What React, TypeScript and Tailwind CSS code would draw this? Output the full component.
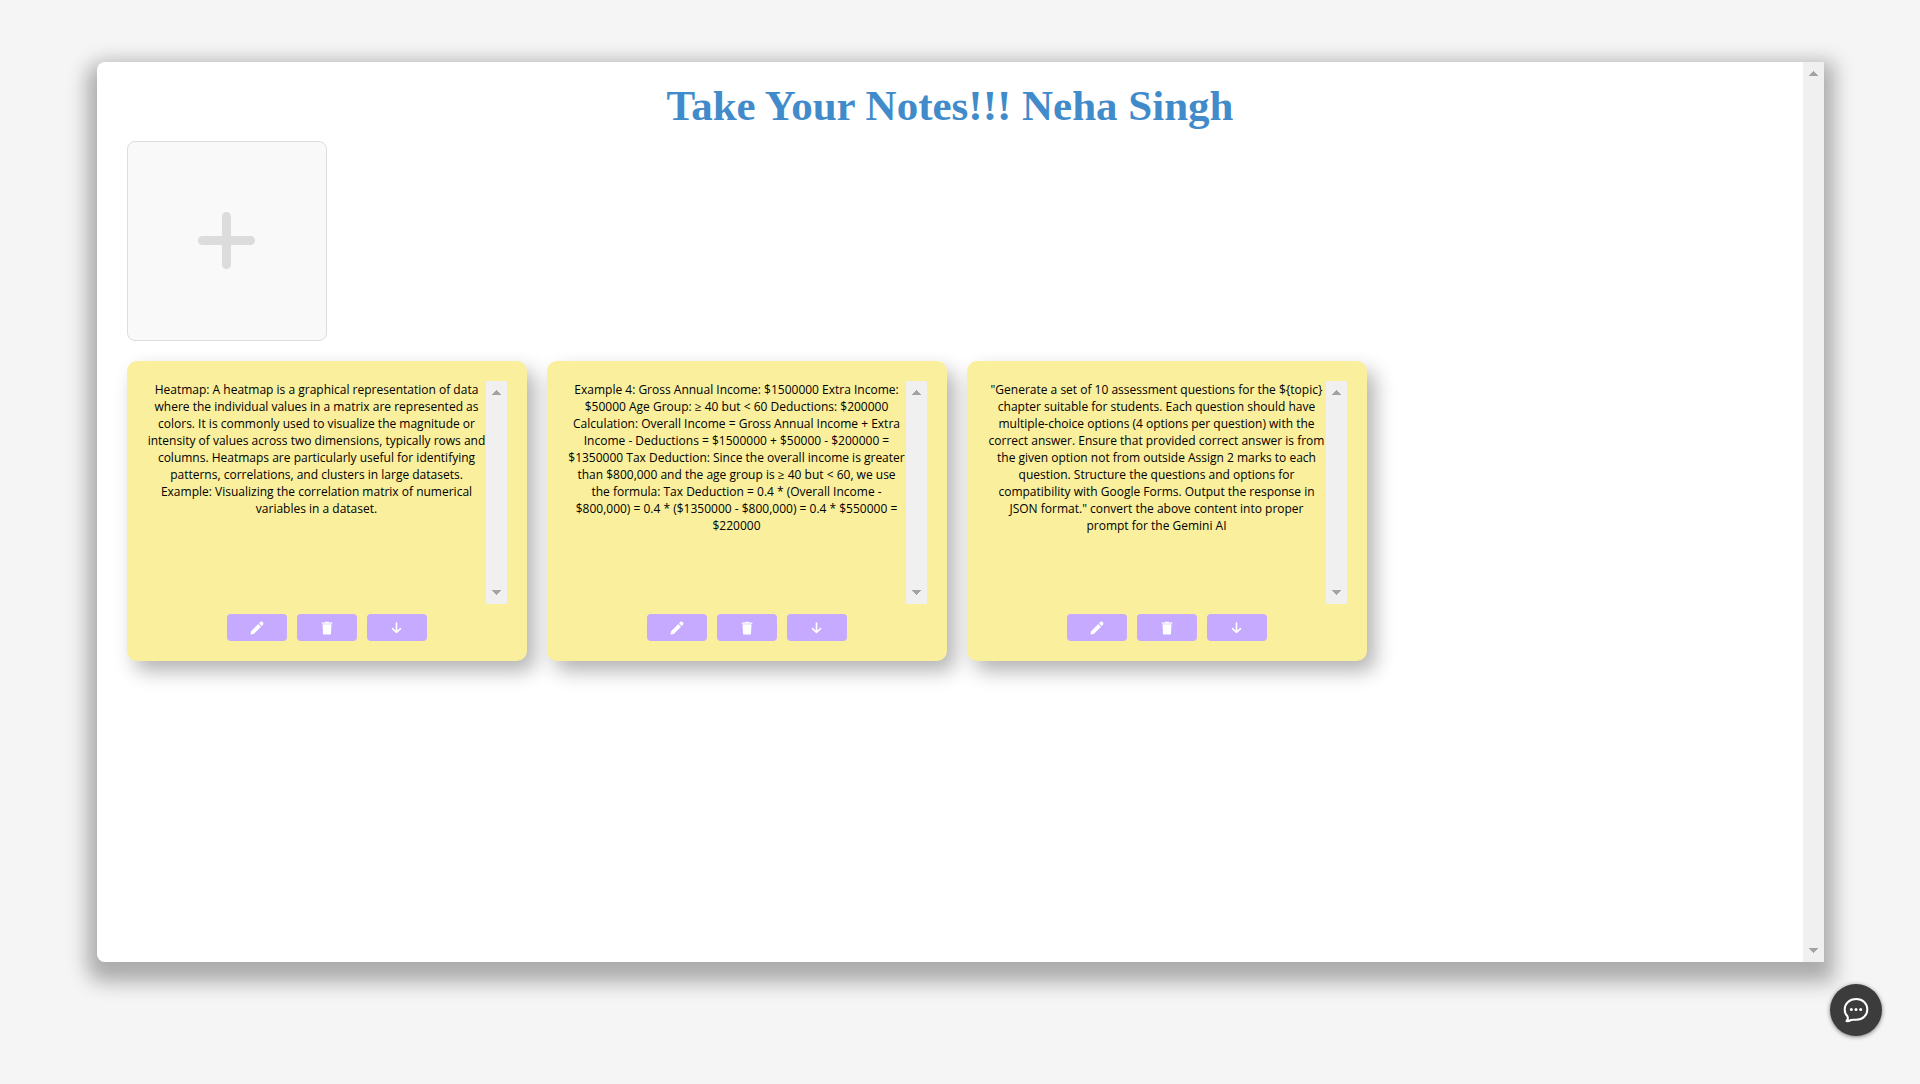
import React from "react";

const notes = [
  "Heatmap: A heatmap is a graphical representation of data where the individual values in a matrix are represented as colors. It is commonly used to visualize the magnitude or intensity of values across two dimensions, typically rows and columns. Heatmaps are particularly useful for identifying patterns, correlations, and clusters in large datasets. Example: Visualizing the correlation matrix of numerical variables in a dataset.",
  "Example 4: Gross Annual Income: $1500000 Extra Income: $50000 Age Group: ≥ 40 but < 60 Deductions: $200000 Calculation: Overall Income = Gross Annual Income + Extra Income - Deductions = $1500000 + $50000 - $200000 = $1350000 Tax Deduction: Since the overall income is greater than $800,000 and the age group is ≥ 40 but < 60, we use the formula: Tax Deduction = 0.4 * (Overall Income - $800,000) = 0.4 * ($1350000 - $800,000) = 0.4 * $550000 = $220000",
  '"Generate a set of 10 assessment questions for the ${topic} chapter suitable for students. Each question should have multiple-choice options (4 options per question) with the correct answer. Ensure that provided correct answer is from the given option not from outside Assign 2 marks to each question. Structure the questions and options for compatibility with Google Forms. Output the response in JSON format." convert the above content into proper prompt for the Gemini AI',
];

function ScrollTrack() {
  return (
    <div className="flex w-[21px] shrink-0 flex-col justify-between bg-[#f0f0f0] text-[#a3a3a3]">
      <button type="button" aria-label="Scroll up" className="flex h-[23px] items-center justify-center">
        <svg width="9" height="5" viewBox="0 0 9 5" fill="currentColor" shapeRendering="crispEdges">
          <path d="M4.5 0 9 5H0z" />
        </svg>
      </button>
      <button type="button" aria-label="Scroll down" className="flex h-[23px] items-center justify-center">
        <svg width="9" height="5" viewBox="0 0 9 5" fill="currentColor" shapeRendering="crispEdges">
          <path d="M4.5 5 9 0H0z" />
        </svg>
      </button>
    </div>
  );
}

function ActionButton({ label, children }: { label: string; children: React.ReactNode }) {
  return (
    <button
      type="button"
      aria-label={label}
      className="flex h-[27px] w-[60px] items-center justify-center rounded bg-[#c5aaff] text-white"
    >
      {children}
    </button>
  );
}

function NoteCard({ text }: { text: string }) {
  return (
    <article className="flex h-[300px] w-[400px] flex-col gap-2.5 rounded-[10px] bg-[#faef9d] p-5 shadow-[8px_10px_20px_rgba(0,0,0,0.3)]">
      <div className="flex min-h-0 flex-1">
        <p className="flex-1 text-center text-[12px] leading-[17px] text-black">{text}</p>
        <ScrollTrack />
      </div>
      <div className="flex justify-center gap-2.5">
        <ActionButton label="Edit note">
          <svg width="14" height="14" viewBox="0 0 14 14" fill="currentColor">
            <path d="M.4 13.500 1.100 10.200 8.300 3 11 5.700 3.800 12.900ZM9 2.300 10.300 1C11 .4 11.800.4 12.400 1L13 1.600C13.600 2.200 13.600 3 13 3.700L11.700 5Z" />
          </svg>
        </ActionButton>
        <ActionButton label="Delete note">
          <svg width="14" height="14" viewBox="0 0 14 14" fill="currentColor">
            <path d="M5.300.700h3.400l.5.700h3.100v1.400H1.700V1.400h3.100zM2.500 3.200h9l-.5 9.200c0 .6-.5 1-1.100 1H4.100c-.6 0-1.100-.4-1.100-1z" />
          </svg>
        </ActionButton>
        <ActionButton label="Download note">
          <svg width="14" height="14" viewBox="0 0 14 14" fill="none" stroke="currentColor" strokeWidth="1.6" strokeLinecap="round" strokeLinejoin="round">
            <path d="M6.500 2v9.500M2.500 7.700l4 3.800 4-3.800" />
          </svg>
        </ActionButton>
      </div>
    </article>
  );
}

export default function App() {
  return (
    <div className="flex min-h-screen flex-col bg-[#f5f5f5] pt-[62px] pr-24 pb-[122px] pl-[97px] font-['Open_Sans',sans-serif]">
      <main className="flex flex-1 rounded-l-lg bg-white shadow-[0_10px_20px_10px_rgba(0,0,0,0.3)]">
        <div className="flex flex-1 flex-col px-[30px] pt-[19px]">
          <h1 className="mb-2.5 text-center font-['Liberation_Serif',serif] text-[43px] leading-[50px] font-bold text-[#428bca]">
            Take Your Notes!!! Neha Singh
          </h1>
          <button
            type="button"
            aria-label="Add note"
            className="flex size-[200px] items-center justify-center rounded-lg border border-[#ddd] bg-[#f9f9f9] text-[#dcdcdc]"
          >
            <svg width="58" height="58" viewBox="0 0 58 58" fill="none" stroke="currentColor" strokeWidth="9" strokeLinecap="round">
              <path d="M28.500 4.500v48M4.500 28.500h48" />
            </svg>
          </button>
          <section aria-label="Notes" className="mt-5 flex flex-wrap gap-5">
            {notes.map((text) => (
              <NoteCard key={text} text={text} />
            ))}
          </section>
        </div>
        <ScrollTrack />
      </main>
      <button
        type="button"
        aria-label="Open chat"
        className="fixed right-[38px] bottom-12 flex size-[52px] items-center justify-center rounded-full bg-[#3c3c3c] text-white shadow-[0_1px_4px_rgba(0,0,0,0.5)]"
      >
        <svg width="26" height="26" viewBox="0 0 26 26" fill="none">
          <path
            d="M13.200 2C19.800 2 24.300 6.600 24.300 12.400S19.800 22.800 13.200 22.800C11.200 22.800 9.500 22.400 8.200 23C6.800 23.700 5 24.300 3.500 24.100C5 22.700 5.200 21 4.500 19.300C2.700 17.500 1.700 15.300 1.700 12.400C1.700 6.600 6.600 2 13.200 2Z"
            stroke="currentColor"
            strokeWidth="2"
            strokeLinejoin="round"
          />
          <g fill="currentColor">
            <circle cx="8.300" cy="12.500" r="1.500" />
            <circle cx="13" cy="12.500" r="1.500" />
            <circle cx="17.700" cy="12.500" r="1.500" />
          </g>
        </svg>
      </button>
    </div>
  );
}
